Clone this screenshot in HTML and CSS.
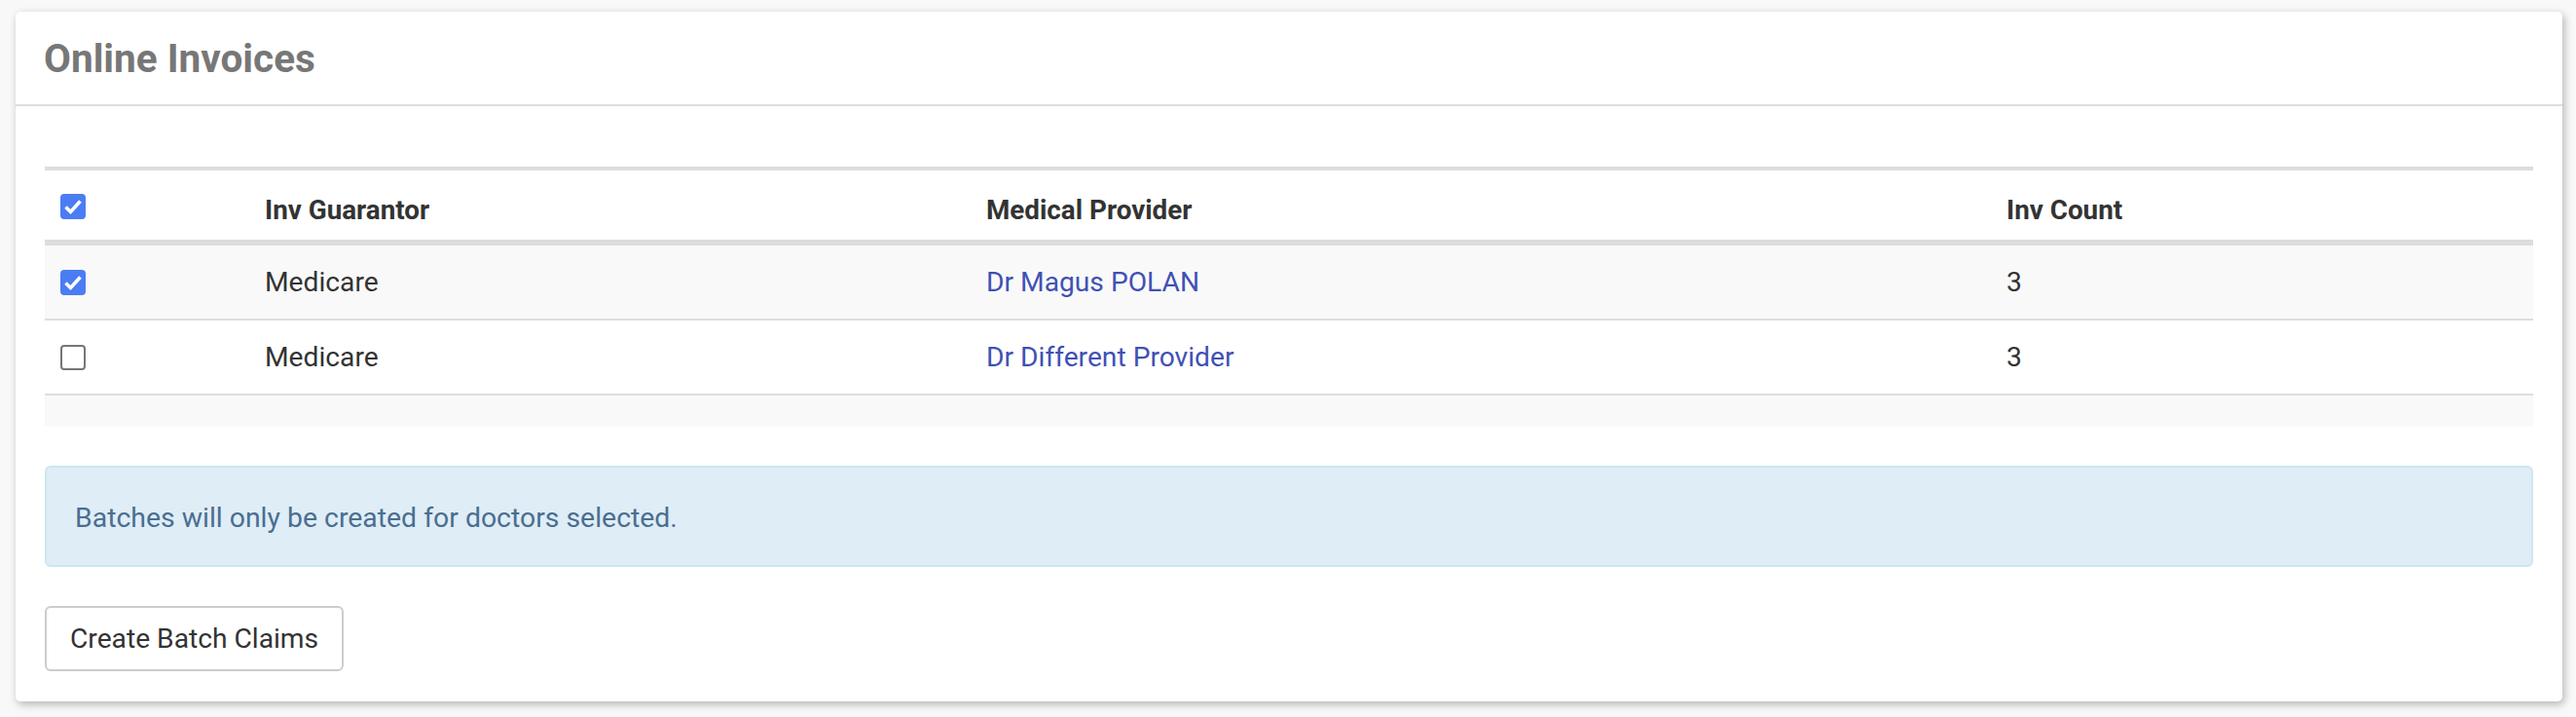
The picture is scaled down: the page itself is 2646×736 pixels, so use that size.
FILE: index.html
```html
<!DOCTYPE html>
<html lang="en">
<head>
<meta charset="utf-8">
<title>Online Invoices</title>
<link rel="stylesheet" href="styles.css">
</head>
<body>
<div class="card">
  <div class="card-header">
    <h3 class="card-title">Online Invoices</h3>
  </div>
  <div class="card-body">
    <div class="grid">
      <div class="row head">
        <div class="cell cell-check"><span class="cb checked"><svg viewBox="0 0 26 26"><polyline points="5.5,13.5 10.5,18.5 20.5,7.5"/></svg></span></div>
        <div class="cell">Inv Guarantor</div>
        <div class="cell">Medical Provider</div>
        <div class="cell">Inv Count</div>
      </div>
      <div class="row striped">
        <div class="cell cell-check"><span class="cb checked"><svg viewBox="0 0 26 26"><polyline points="5.5,13.5 10.5,18.5 20.5,7.5"/></svg></span></div>
        <div class="cell">Medicare</div>
        <div class="cell"><a class="link" href="#">Dr Magus POLAN</a></div>
        <div class="cell">3</div>
      </div>
      <div class="row">
        <div class="cell cell-check"><span class="cb"></span></div>
        <div class="cell">Medicare</div>
        <div class="cell"><a class="link" href="#">Dr Different Provider</a></div>
        <div class="cell">3</div>
      </div>
      <div class="row foot striped"></div>
    </div>
    <div class="alert">Batches will only be created for doctors selected.</div>
    <div class="actions">
      <button class="btn" type="button">Create Batch Claims</button>
    </div>
  </div>
</div>
</body>
</html>
```

FILE: styles.css
```css
html, body {
  margin: 0;
  padding: 0;
}
body {
  background: #f8f8f8;
  font-family: Roboto, "Liberation Sans", Arial, sans-serif;
  font-size: 28.2px;
  color: #333;
  padding: 12px 14px 14px 16px;
}
.card {
  background: #fff;
  border-radius: 5px;
  box-shadow: 2px 3px 8px rgba(0, 0, 0, 0.28);
}
.card-header {
  height: 97px;
  box-sizing: border-box;
  padding: 2px 29px 0 29px;
  display: flex;
  align-items: center;
  border-bottom: 2px solid #dddddd;
}
.card-title {
  margin: 0;
  font-size: 40.5px;
  line-height: 1.1;
  font-weight: 700;
  color: #777777;
}
.card-body {
  padding: 62px 30px 31px 30px;
  display: flex;
  flex-direction: column;
}
.grid {
  border-top: 4px solid #dddddd;
}
.row {
  display: grid;
  grid-template-columns: 210px 741px 1048px 1fr;
  align-items: center;
  height: 75px;
  border-bottom: 2px solid #dddddd;
}
.row.head {
  height: 71px;
  border-bottom: 6px solid #dddddd;
  font-weight: 700;
  font-size: 27.8px;
}
.row.head .cell {
  padding-top: 11px;
}
.row.head .cell-check {
  padding-top: 3px;
}
.row.foot {
  height: 32px;
  border-bottom: none;
}
.striped {
  background: #f9f9f9;
}
.cell {
  padding: 1px 16px 0 16px;
  line-height: 1.2;
  display: flex;
  align-items: center;
}
.cell-check {
  padding-top: 0;
}
.cb {
  width: 26px;
  height: 26px;
  box-sizing: border-box;
  border: 2px solid #767676;
  border-radius: 4px;
  background: #fff;
  display: block;
}
.cb.checked {
  border: none;
  background: #4a7df4;
}
.cb svg {
  width: 26px;
  height: 26px;
  display: block;
}
.cb polyline {
  fill: none;
  stroke: #fff;
  stroke-width: 3.6;
}
.link {
  color: #3f51b5;
  text-decoration: none;
}
.alert {
  margin-top: 40px;
  height: 104px;
  box-sizing: border-box;
  padding: 2px 29px 0 29px;
  display: flex;
  align-items: center;
  background: #dfedf6;
  border: 2px solid #cde6f0;
  border-radius: 6px;
  color: #4a6e90;
  font-size: 28.4px;
}
.actions {
  margin-top: 40px;
  display: flex;
}
.btn {
  height: 67px;
  box-sizing: border-box;
  padding: 0 24px;
  font-family: inherit;
  font-size: 28.2px;
  color: #333;
  background: #fff;
  border: 2px solid #cccccc;
  border-radius: 6px;
}
```
